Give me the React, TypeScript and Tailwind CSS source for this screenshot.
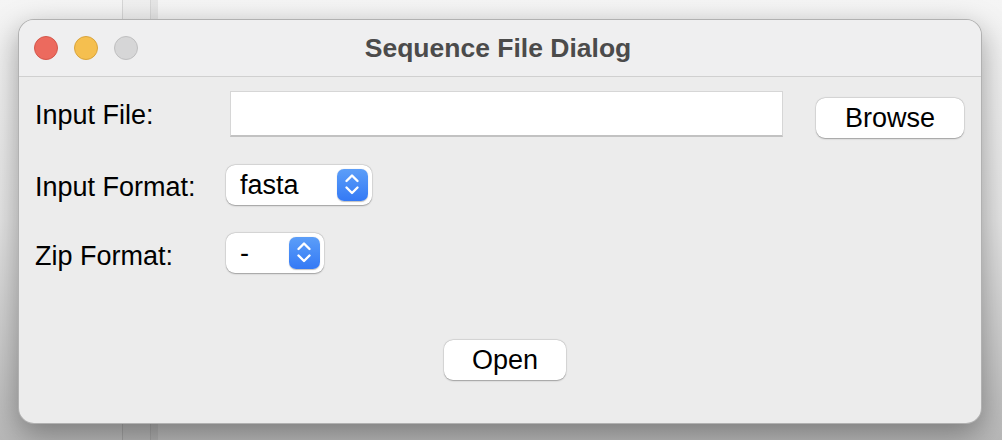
import React from 'react';

const font = { fontFamily: '"Liberation Sans", Arial, sans-serif' };

const Stepper = () => (
  <div className="w-[31px] h-[32px] rounded-[7px] bg-gradient-to-b from-[#5c9ef8] to-[#3479f5] flex items-center justify-center shadow-[0_0.5px_1px_rgba(0,0,0,0.25)]">
    <svg width="31" height="32" viewBox="0 0 31 32" fill="none">
      <path d="M9.5 12L15 6.5L20.5 12" stroke="white" strokeWidth="2.4" strokeLinecap="round" strokeLinejoin="round" />
      <path d="M9.5 18.5L15 24L20.5 18.5" stroke="white" strokeWidth="2.4" strokeLinecap="round" strokeLinejoin="round" />
    </svg>
  </div>
);

const Select = ({ value, width }: { value: string; width: string }) => (
  <div
    className={`${width} h-[40px] bg-white rounded-[9px] flex items-center justify-between pl-[14px] pr-[4px] shadow-[0_0.5px_1.5px_rgba(0,0,0,0.3),0_0_0_0.5px_rgba(0,0,0,0.08)]`}
  >
    <span className="text-[27px] leading-[30px] text-black">{value}</span>
    <Stepper />
  </div>
);

const Button = ({ label, width }: { label: string; width: string }) => (
  <button
    className={`${width} h-[40px] bg-white rounded-[9px] text-[27px] leading-[30px] text-black shadow-[0_0.5px_1.5px_rgba(0,0,0,0.3),0_0_0_0.5px_rgba(0,0,0,0.08)]`}
  >
    {label}
  </button>
);

export default function App() {
  return (
    <div
      style={font}
      className="relative w-[1002px] h-[440px] overflow-hidden bg-gradient-to-b from-[#f5f5f5] via-[#e4e4e4] to-[#b8b8b8]"
    >
      {/* window behind */}
      <div className="absolute left-[122px] top-0 bottom-0 w-[29px] border-x border-black/10 bg-black/[0.02]" />
      <div className="absolute left-[151px] top-0 bottom-0 w-[7px] bg-black/[0.06]" />

      <div className="relative ml-[18px] mt-[19px] w-[964px] h-[405px] rounded-[16px] bg-[#ececec] border border-black/25 overflow-hidden shadow-[0_10px_30px_rgba(0,0,0,0.35)]">
        {/* Title bar */}
        <div className="h-[57px] bg-[#efeff0] border-b border-[#d0d0d0] grid grid-cols-[1fr_auto_1fr] items-center">
          <div className="flex items-center gap-[16px] pl-[15px]">
            <span className="w-[24px] h-[24px] rounded-full bg-[#ec6a5e] border border-[#d4574b]" />
            <span className="w-[24px] h-[24px] rounded-full bg-[#f5bf4f] border border-[#d9a43c]" />
            <span className="w-[24px] h-[24px] rounded-full bg-[#d6d6d7] border border-[#bfbfc0]" />
          </div>
          <div className="text-[26.5px] leading-[30px] font-bold text-[#4b4b4b] pr-[4px]">
            Sequence File Dialog
          </div>
          <div />
        </div>

        {/* Body */}
        <div className="pl-[16px]">
          <div className="flex items-start mt-[14px]">
            <div className="w-[195px] mt-[9px] text-[27px] leading-[30px] text-black">Input File:</div>
            <div className="w-[553px] h-[46px] bg-white border border-[#d6d6d6] border-b-2 border-b-[#c2c2c2]" />
            <div className="ml-[33px] mt-[7px]">
              <Button label="Browse" width="w-[148px]" />
            </div>
          </div>

          <div className="flex items-start mt-[27px]">
            <div className="w-[191px] mt-[7px] text-[27px] leading-[30px] text-black">Input Format:</div>
            <Select value="fasta" width="w-[146px]" />
          </div>

          <div className="flex items-start mt-[28px]">
            <div className="w-[191px] mt-[8px] text-[27px] leading-[30px] text-black">Zip Format:</div>
            <Select value="-" width="w-[98px]" />
          </div>

          <div className="flex mt-[67px] pl-[409px]">
            <Button label="Open" width="w-[122px]" />
          </div>
        </div>
      </div>
    </div>
  );
}
